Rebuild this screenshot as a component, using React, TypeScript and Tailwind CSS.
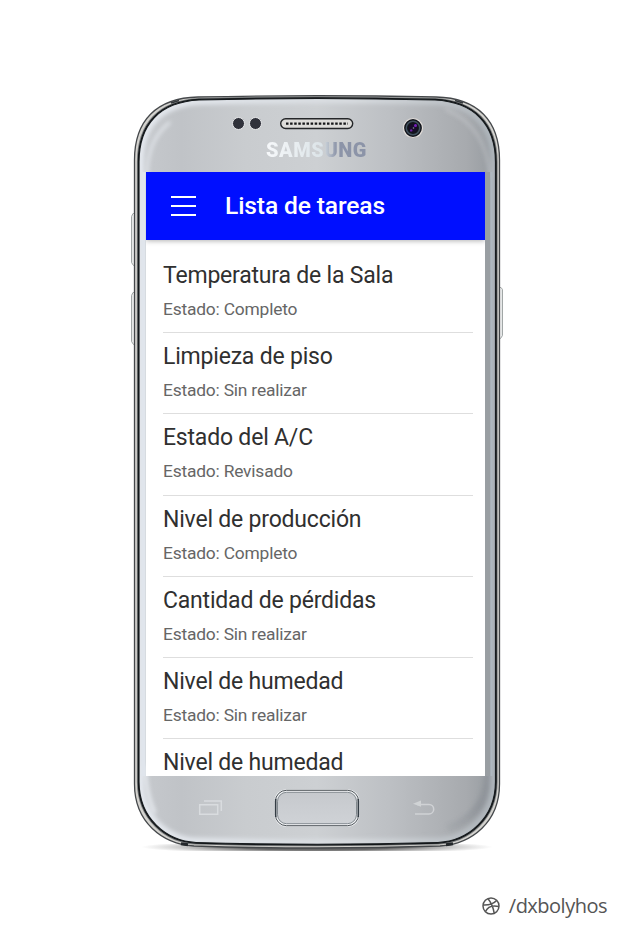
import React from "react";

const tasks = [
  ["Temperatura de la Sala", "Completo"],
  ["Limpieza de piso", "Sin realizar"],
  ["Estado del A/C", "Revisado"],
  ["Nivel de producción", "Completo"],
  ["Cantidad de pérdidas", "Sin realizar"],
  ["Nivel de humedad", "Sin realizar"],
  ["Nivel de humedad", ""],
];

const BODY =
  "M134.5 160 C134.5 121 156 98 198 97 Q317 94.5 436 97 C478 98 499.5 121 499.5 160 V784 C499.5 822 472 844 440 846 Q317 850 194 846 C162 844 134.5 822 134.5 784 Z";
const INNER =
  "M139 162 C139 124 160 102 199 100 Q317 97 435 100 C474 102 495.5 124 495.5 162 V782 C495.5 818 468 841 438 842.5 Q317 846 196 842.5 C166 841 139 818 139 782 Z";

function PhoneShell() {
  return (
    <svg className="absolute inset-0" width="630" height="935" viewBox="0 0 630 935" fill="none" aria-hidden="true">
      <defs>
        <linearGradient id="metal" x1="139" x2="495" y1="0" y2="0" gradientUnits="userSpaceOnUse">
          <stop offset="0" stopColor="#c6c9cd" />
          <stop offset=".12" stopColor="#c0c3c7" />
          <stop offset=".3" stopColor="#c9cccf" />
          <stop offset=".5" stopColor="#cdd0d3" />
          <stop offset=".7" stopColor="#bdc0c4" />
          <stop offset=".92" stopColor="#a7aaae" />
          <stop offset="1" stopColor="#969ba0" />
        </linearGradient>
        <linearGradient id="edge" x1="139" x2="495" y1="0" y2="0" gradientUnits="userSpaceOnUse">
          <stop offset="0" stopColor="#e4e8ee" />
          <stop offset=".6" stopColor="#d8dce0" />
          <stop offset=".85" stopColor="#bfc4c9" />
          <stop offset="1" stopColor="#adb4ba" />
        </linearGradient>
        <linearGradient id="home" x1="0" x2="0" y1="790" y2="826" gradientUnits="userSpaceOnUse">
          <stop stopColor="#c5c8cc" />
          <stop offset="1" stopColor="#d0d3d7" />
        </linearGradient>
        <linearGradient id="key">
          <stop stopColor="#c7cbcb" />
          <stop offset=".4" stopColor="#f8f8f8" />
          <stop offset="1" stopColor="#d8dcdc" />
        </linearGradient>
        <linearGradient id="shade" x1="0" x2="0" y1="740" y2="836" gradientUnits="userSpaceOnUse">
          <stop stopColor="#8d9298" />
          <stop offset=".7" stopColor="#8d9298" />
          <stop offset="1" stopColor="#8d9298" stopOpacity="0" />
        </linearGradient>
        <radialGradient id="ground">
          <stop offset=".45" stopColor="#444" stopOpacity=".8" />
          <stop offset="1" stopColor="#777" stopOpacity="0" />
        </radialGradient>
        <clipPath id="innerClip"><path d={INNER} /></clipPath>
        <clipPath id="groundClip"><rect x="140" y="844" width="354" height="7" /></clipPath>
        <filter id="soft" x="0" y="0" width="630" height="935" filterUnits="userSpaceOnUse"><feGaussianBlur stdDeviation="2" /></filter>
      </defs>
      <ellipse cx="317" cy="847" rx="176" ry="7" fill="url(#ground)" clipPath="url(#groundClip)" />
      <path d="M135 213.500h-2l-1.500 3v46l2 3h2M135 292.500h-2l-1.500 3v46l2 3h2" fill="url(#key)" stroke="#a1a6a6" />
      <path d="M499 287.500h2l1.500 2v46l-2 3h-2" fill="url(#key)" stroke="#a1a6a6" />
      <path d={BODY} fill="#d4d3cf" stroke="#45484b" strokeWidth="1.3" />
      <path d={INNER} fill="url(#metal)" stroke="#777a7c" strokeWidth="4.200" />
      <path d={INNER} fill="url(#metal)" stroke="#101416" strokeWidth="2.400" />
      <g clipPath="url(#innerClip)">
        <path d="M488.500 740 V778 C486 804 473 820 448 830" stroke="url(#shade)" strokeWidth="9" opacity=".75" filter="url(#soft)" />
        <path d={INNER} stroke="url(#edge)" strokeWidth="10" filter="url(#soft)" />
        <path d="M147 176 C147 150 155 134 170 122" stroke="#e6eaef" strokeWidth="2.500" filter="url(#soft)" />
        <path d="M490 178 C488 141 472 120 445 109" stroke="#d5d8dc" strokeWidth="2" opacity=".6" filter="url(#soft)" />
        <path d="M145 765 Q146 795 155 813" stroke="#edf1f6" strokeWidth="3" filter="url(#soft)" />
        <path d="M143.500 172V776" stroke="#e0e5ec" strokeWidth="4" />
        <path d="M487.500 172V776" stroke="#999ea2" strokeWidth="5" />
        <path d="M491.500 172V776" stroke="#aeb8c0" strokeWidth="2" />
      </g>
      <path d={INNER} stroke="#171b1e" strokeWidth="1.200" />
      <path d="M171 103l8-2.500M463 103l-8-2.500" stroke="#34383b" strokeWidth="1.800" />
      <path d="M181 843.800l7 1M453 843.800l-7 1" stroke="#24282b" strokeWidth="3" />

      <g fill="#30323b" stroke="#e9eaec">
        <circle cx="238.500" cy="123.500" r="6" />
        <circle cx="255.500" cy="123.500" r="6" />
      </g>
      <rect x="280.700" y="118.700" width="72" height="9.800" rx="4.900" fill="#deddda" stroke="#252729" strokeWidth="1.400" />
      <path d="M286 123.700H348" stroke="#161719" strokeWidth="2.200" strokeDasharray="2.500 1.600" />
      <circle cx="413" cy="128" r="9.500" fill="#11141b" stroke="#e3dfdc" strokeWidth="1.200" />
      <circle cx="413" cy="128" r="6.700" stroke="#41515f" strokeWidth="1.500" />
      <circle cx="413" cy="128" r="4" fill="#170c29" />
      <circle cx="415.500" cy="125.500" r="1.500" fill="#7620bd" />
      <circle cx="411.200" cy="130.400" r="1.200" fill="#6924a0" />
      <circle cx="413.500" cy="128" r=".8" fill="#8990a0" />

      <g stroke="#d9dcdf" strokeWidth="1.500">
        <path d="M199.700 804.700h18v9.600h-18zM204 801h17.300v10" />
        <path d="M417 804.500h12a4.700 4.700 0 0 1 0 9.400h-14" stroke="#d0d2d5" />
        <path d="M413 803.800l8-3.300v6.300z" fill="#d0d3d5" stroke="none" />
      </g>
      <rect x="276" y="791" width="82" height="34" rx="10" fill="url(#home)" stroke="#f2f4f6" strokeWidth="3" />
      <rect x="275.400" y="790.300" width="83.200" height="35.400" rx="11" stroke="#4d5358" strokeWidth="1" />
      <rect x="277.500" y="792.300" width="79" height="31.400" rx="9" stroke="#6a7279" strokeWidth=".8" />
      <path d="M275.700 799V817M358.300 799V817" stroke="#343d45" strokeWidth="1.600" />
    </svg>
  );
}

export default function App() {
  return (
    <main className="relative h-[935px] w-[630px] overflow-hidden bg-white font-['Roboto',sans-serif]">
      <PhoneShell />
      <div className="relative flex h-full flex-col">
        <div className="flex h-[172px] items-end pb-[8px] pl-[266px]">
          <span className="bg-linear-to-r from-[#f6f8fa] via-[#dce4e8] via-55% to-[#8c94a8] to-70% bg-clip-text font-['Roboto',sans-serif] text-[20px] font-black leading-[27px] tracking-[0.55px] text-transparent">
            SAMSUNG
          </span>
        </div>
        <section className="ml-[146px] flex h-[604px] w-[339px] flex-col overflow-hidden bg-white">
          <header className="z-10 flex h-[68px] shrink-0 items-center bg-[#000fff] pl-[25px] shadow-[0_1px_5px_rgba(0,0,0,0.3)]">
            <button aria-label="Menu" className="flex w-[25px] flex-col gap-[7px]">
              <span className="h-[2px] bg-white" />
              <span className="h-[2px] bg-white" />
              <span className="h-[2px] bg-white" />
            </button>
            <h1 className="ml-[29px] whitespace-nowrap text-[24.6px] font-medium leading-[30px] tracking-[-0.13px] text-white">Lista de tareas</h1>
          </header>
          <ul className="ml-[17px] mr-[12px] pt-[12px]">
            {tasks.map(([title, status], i) => (
              <li key={i} className={status ? "h-[81.2px] border-b border-[#dedede] pt-[9px]" : "pt-[9px]"}>
                <h2 className="whitespace-nowrap text-[23px] leading-[30px] tracking-[-0.2px] text-[#303030]">{title}</h2>
                {status && <p className="mt-[6px] text-[17.4px] leading-[24px] tracking-[-0.2px] text-[#666]">Estado: {status}</p>}
              </li>
            ))}
          </ul>
        </section>
        <footer className="mr-[23px] mt-auto flex h-[59px] items-start justify-end gap-[9px] pt-[15px] text-[#555]">
          <svg className="mt-[6px]" width="18" height="18" viewBox="0 0 18 18" fill="none" stroke="currentColor" strokeWidth="1.500" aria-hidden="true">
            <circle cx="9" cy="9" r="8" />
            <path d="M6 1.700C9 5.200 11.200 10 12.200 16.200M1.200 7.900C6.300 8.100 11.500 6.900 14.600 3.400M3.500 14.500C5.600 9.800 10.500 8 16.900 9.500" />
          </svg>
          <span className="font-['Open_Sans',sans-serif] text-[20px] leading-[30px] tracking-[-0.5px]">/dxbolyhos</span>
        </footer>
      </div>
    </main>
  );
}
